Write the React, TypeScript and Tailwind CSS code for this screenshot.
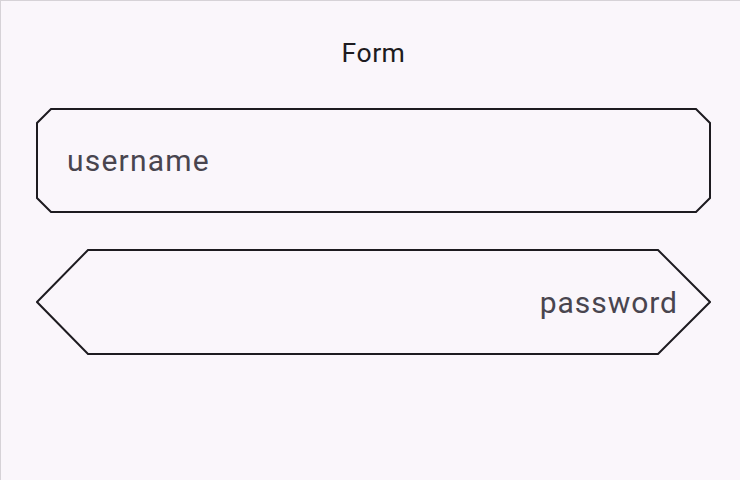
const font = "font-['Roboto','Liberation_Sans',sans-serif]";

const Octagon = () => (
    <svg className="absolute inset-0" width="675" height="105" viewBox="0 0 675 105">
        <polygon
            points="15,1 660,1 674,15 674,90 660,104 15,104 1,90 1,15"
            fill="none"
            stroke="#1d1b20"
            strokeWidth="2"
        />
    </svg>
);

const Hexagon = () => (
    <svg className="absolute inset-0" width="675" height="106" viewBox="0 0 675 106">
        <polygon
            points="1,53 52,1 622,1 674,53 622,105 52,105"
            fill="none"
            stroke="#1d1b20"
            strokeWidth="2"
        />
    </svg>
);

const App = () => {
    return (
        <div
            className={`min-h-[480px] w-[740px] bg-[#faf6fb] border-t border-l border-[#d6d2d7] ${font}`}
        >
            <div className="flex flex-col pl-[35px] pr-[29px] pt-[33px]">
                <h1 className="text-center text-[26.6px] leading-[38px] tracking-[0.47px] text-[#1d1b20]">
                    Form
                </h1>
                <div className="relative mt-[36px] h-[105px] w-[675px]">
                    <Octagon />
                    <input
                        type="text"
                        placeholder="username"
                        className="relative z-10 h-full w-full bg-transparent pl-[31px] pr-[31px] text-[30px] tracking-[1.2px] text-[#1d1b20] outline-none placeholder:text-[#49454f]"
                    />
                </div>
                <div className="relative mt-[36px] h-[106px] w-[675px]">
                    <Hexagon />
                    <input
                        type="password"
                        placeholder="password"
                        className="relative z-10 h-full w-full bg-transparent pl-[33px] pr-[33px] text-right text-[30px] tracking-[0.95px] text-[#1d1b20] outline-none placeholder:text-[#49454f]"
                    />
                </div>
            </div>
        </div>
    );
};

export default App;
